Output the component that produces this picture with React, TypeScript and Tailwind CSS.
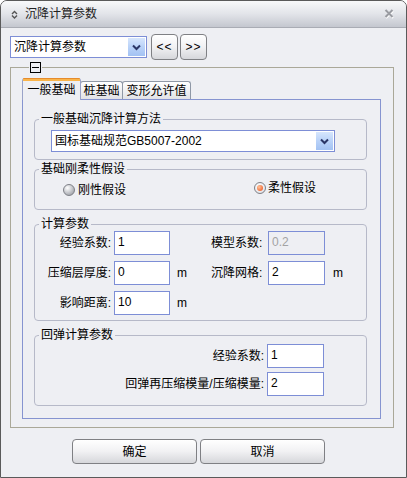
import type { ReactNode } from "react";

function Combo({ value, className }: { value: string; className: string }) {
  return (
    <div className={`flex h-[22px] border border-[#7d8ed6] bg-white ${className}`}>
      <span className="flex-1 pl-[3px] leading-[20px] whitespace-nowrap">{value}</span>
      <span className="m-px flex w-[17px] items-center justify-center bg-linear-to-b from-[#d7e6fd] via-[#b9d2f8] to-[#a3c2f3]">
        <svg width="9" height="7" viewBox="0 0 9 7">
          <path d="M1 1.5 L4.5 5 L8 1.5" stroke="#2a3566" strokeWidth="2" fill="none" />
        </svg>
      </span>
    </div>
  );
}

function GroupBox({ title, className, children }: { title: string; className: string; children: ReactNode }) {
  return (
    <fieldset className={`w-[333px] rounded-[4px] border border-[#b6b9c8] ${className}`}>
      <legend className="ml-[4px] px-[2px] leading-[14px]">{title}</legend>
      {children}
    </fieldset>
  );
}

function Field({ value, disabled, w = "w-[56px]" }: { value: string; disabled?: boolean; w?: string }) {
  return (
    <div
      className={`h-[24px] ${w} border border-[#7d8ed6] pl-[3px] pt-[2px] leading-[16px] ${
        disabled ? "bg-[#eeeff3] text-[#a3a3a3]" : "bg-white"
      }`}
    >
      {value}
    </div>
  );
}

function Radio({ checked }: { checked?: boolean }) {
  return (
    <span
      className={`flex h-[12px] w-[12px] items-center justify-center rounded-full border border-[#7e8087] ${
        checked
          ? "bg-[radial-gradient(circle_at_40%_35%,#ffffff,#e4e5e9_70%,#b9bbc1)]"
          : "bg-[radial-gradient(circle_at_35%_30%,#ffffff,#bfc1c6_55%,#8f9298)]"
      }`}
    >
      {checked && (
        <span className="h-[6px] w-[6px] rounded-full bg-[radial-gradient(circle_at_35%_35%,#ffc49a,#ec4a14)]" />
      )}
    </span>
  );
}

function Btn({ children, className }: { children: ReactNode; className: string }) {
  return (
    <button
      className={`flex items-center justify-center rounded-[4px] border border-[#7f8084] bg-linear-to-b from-white via-[#f1f1f3] to-[#d6d7db] ${className}`}
    >
      {children}
    </button>
  );
}

export default function App() {
  return (
    <div className="flex h-[478px] w-[407px] flex-col overflow-hidden rounded-t-[7px] border border-[#5a5a5a] bg-[#eeeff3] font-['Liberation_Sans','Noto_Sans_CJK_SC',sans-serif] text-[12px] text-black">
      {/* TITLE BAR */}
      <div className="flex h-[27px] shrink-0 items-center border-b border-[#a9acb4] bg-linear-to-b from-[#f8f9fa] via-[#e2e4e9] to-[#c4c7cf]">
        <svg className="ml-[10px]" width="7" height="9" viewBox="0 0 7 9">
          <path d="M1 4 L3.5 1.5 L6 4 M1 5.5 L3.5 8 L6 5.5" stroke="#555" strokeWidth="1.4" fill="none" />
        </svg>
        <span className="ml-[7px] text-[#222]">沉降计算参数</span>
        <svg className="mr-[11px] ml-auto" width="11" height="10" viewBox="0 0 11 10">
          <path d="M2 2 L9 9 M9 2 L2 9" stroke="#ffffff" strokeWidth="2" />
          <path d="M1.5 1 L8.5 8 M8.5 1 L1.5 8" stroke="#9a9ca2" strokeWidth="2" />
        </svg>
      </div>

      {/* TOP ROW */}
      <div className="mt-[6px] flex h-[26px] items-center pl-[9px]">
        <Combo value="沉降计算参数" className="w-[137px]" />
        <Btn className="ml-[4px] h-[26px] w-[27px] tracking-[1px]">&lt;&lt;</Btn>
        <Btn className="ml-[2px] h-[26px] w-[27px] tracking-[1px]">&gt;&gt;</Btn>
      </div>

      {/* OUTER GROUP */}
      <fieldset className="mt-[2px] ml-[9px] w-[384px] border border-[#aaa898] pb-[8px] pl-[11px]">
        <legend className="ml-[7px] px-px">
          <span className="flex h-[11px] w-[11px] items-center justify-center border border-black">
            <span className="h-px w-[7px] bg-black" />
          </span>
        </legend>

        {/* TABS */}
        <div className="mt-[5px] flex h-[21px] items-end">
          <div className="relative z-10 -mb-px flex h-[22px] w-[59px] flex-col rounded-t-[3px] border-x border-[#9aa3c8] bg-[#eeeff3]">
            <div className="h-[1px] rounded-t-[3px] bg-[#e68b2c]" />
            <div className="h-[2px] bg-[#f9b44a]" />
            <span className="pt-[2px] text-center leading-[14px]">一般基础</span>
          </div>
          <div className="-ml-px flex h-[18px] w-[43px] items-center justify-center rounded-t-[3px] border border-b-0 border-[#8f98a6] bg-linear-to-b from-white to-[#e1e2e6]">
            桩基础
          </div>
          <div className="-ml-px flex h-[18px] w-[69px] items-center justify-center rounded-t-[3px] border border-b-0 border-[#8f98a6] bg-linear-to-b from-white to-[#e1e2e6]">
            变形允许值
          </div>
        </div>

        {/* TAB PANEL */}
        <div className="h-[320px] w-[359px] border border-[#8694d0] pt-[12px] pl-[11px]">
          <GroupBox title="一般基础沉降计算方法" className="pb-[7px]">
            <Combo value="国标基础规范GB5007-2002" className="mt-[4px] ml-[16px] w-[284px]" />
          </GroupBox>

          <GroupBox title="基础刚柔性假设" className="mt-[2px] pb-[14px]">
            <div className="mt-[5px] flex h-[14px] items-start pl-[28px]">
              <label className="mt-[2px] flex w-[191px] items-center gap-[3px] leading-[14px]">
                <Radio />
                刚性假设
              </label>
              <label className="flex items-center gap-[2px] leading-[14px]">
                <Radio checked />
                柔性假设
              </label>
            </div>
          </GroupBox>

          <GroupBox title="计算参数" className="mt-[7px] pb-[5px]">
            <div className="grid grid-cols-[79px_56px_41px_57px_57px_auto] items-center gap-y-[6px]">
              <span className="pr-[3px] text-right">经验系数:</span>
              <Field value="1" />
              <span />
              <span>模型系数:</span>
              <Field value="0.2" disabled w="w-[57px]" />
              <span />

              <span className="pr-[3px] text-right">压缩层厚度:</span>
              <Field value="0" />
              <span className="pl-[7px]">m</span>
              <span>沉降网格:</span>
              <Field value="2" w="w-[57px]" />
              <span className="pl-[8px]">m</span>

              <span className="pr-[3px] text-right">影响距离:</span>
              <Field value="10" />
              <span className="pl-[7px]">m</span>
            </div>
          </GroupBox>

          <GroupBox title="回弹计算参数" className="mt-[7px] pb-[9px]">
            <div className="mt-[2px] grid grid-cols-[232px_57px] items-center gap-y-[4px]">
              <span className="pr-[3px] text-right">经验系数:</span>
              <Field value="1" w="w-[57px]" />
              <span className="pr-[3px] text-right">回弹再压缩模量/压缩模量:</span>
              <Field value="2" w="w-[57px]" />
            </div>
          </GroupBox>
        </div>
      </fieldset>

      {/* BOTTOM BUTTONS */}
      <div className="mt-[11px] flex gap-[3px] pl-[71px]">
        <Btn className="h-[25px] w-[125px]">确定</Btn>
        <Btn className="h-[25px] w-[125px]">取消</Btn>
      </div>
    </div>
  );
}
